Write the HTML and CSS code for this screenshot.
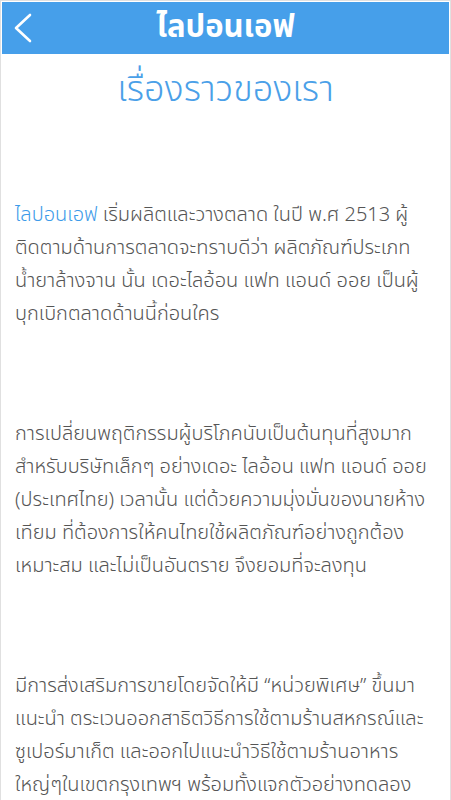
FILE: index.html
```html
<html>
<head>
<meta charset="utf-8" />
<title>ไลปอนเอฟ</title>
<link rel="stylesheet" href="styles.css">
</head>
<body>

<div class="page">
	<div class="topbar">
		<a class="back" href="#">
			<svg width="22" height="30" viewBox="0 0 22 30">
				<polyline points="19,2 5,15 19,28" fill="none" stroke="#fff" stroke-width="2.6" stroke-linecap="round" stroke-linejoin="round"/>
			</svg>
		</a>
		<h1 class="title">ไลปอนเอฟ</h1>
	</div>

	<div class="content">
		<h2 class="heading">เรื่องราวของเรา</h2>

		<p class="story"><span class="brand">ไลปอนเอฟ</span> เริ่มผลิตและวางตลาด ในปี พ.ศ 2513 ผู้<br/>ติดตามด้านการตลาดจะทราบดีว่า ผลิตภัณฑ์ประเภท<br/>น้ำยาล้างจาน นั้น เดอะไลอ้อน แฟท แอนด์ ออย เป็นผู้<br/>บุกเบิกตลาดด้านนี้ก่อนใคร</p>

		<p class="story">การเปลี่ยนพฤติกรรมผู้บริโภคนับเป็นต้นทุนที่สูงมาก<br/>สำหรับบริษัทเล็กๆ อย่างเดอะ ไลอ้อน แฟท แอนด์ ออย<br/>(ประเทศไทย) เวลานั้น แต่ด้วยความมุ่งมั่นของนายห้าง<br/>เทียม ที่ต้องการให้คนไทยใช้ผลิตภัณฑ์อย่างถูกต้อง<br/>เหมาะสม และไม่เป็นอันตราย จึงยอมที่จะลงทุน</p>

		<p class="story">มีการส่งเสริมการขายโดยจัดให้มี “หน่วยพิเศษ” ขึ้นมา<br/>แนะนำ ตระเวนออกสาธิตวิธีการใช้ตามร้านสหกรณ์และ<br/>ซูเปอร์มาเก็ต และออกไปแนะนำวิธีใช้ตามร้านอาหาร<br/>ใหญ่ๆในเขตกรุงเทพฯ พร้อมทั้งแจกตัวอย่างทดลอง</p>
	</div>
</div>

</body>
</html>
```

FILE: styles.css
```css
body{
	margin: 0;
	background: #fff;
	font-family: "Noto Sans Thai", "Noto Sans", sans-serif;
}

.page{
	width: 447px;
	padding: 1px;
	border: 1px solid #e0e0e0;
	border-bottom: none;
	height: 798px;
	overflow: hidden;
}

.topbar{
	position: relative;
	height: 52px;
	background: #469fea;
	display: flex;
	align-items: center;
	justify-content: center;
}

.back{
	position: absolute;
	left: 9px;
	top: 11px;
	display: block;
}

.title{
	margin: 0;
	color: #fff;
	font-size: 31px;
	font-weight: bold;
	line-height: 52px;
}

.content{
	padding: 0 13px;
}

.heading{
	margin: 10px 0 0 0;
	text-align: center;
	color: #4aa0e8;
	font-size: 36px;
	font-weight: 300;
	line-height: 52px;
}

.story{
	margin: 0 0 87px 0;
	color: #555;
	font-size: 20px;
	font-weight: 300;
	line-height: 33px;
}

.story:first-of-type{
	margin-top: 83px;
}

.brand{
	color: #3d9be9;
}
```
